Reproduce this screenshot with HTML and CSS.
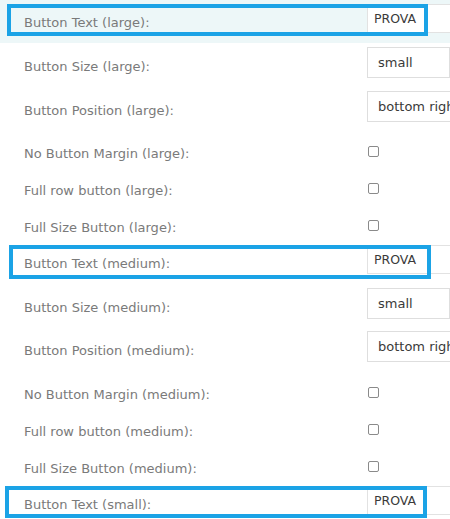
FILE: index.html
```html
<!DOCTYPE html>
<html>
<head>
<meta charset="utf-8">
<link rel="stylesheet" href="styles.css">
</head>
<body>
<div class="form">
  <div class="row row-text row-hl">
    <div class="label">Button Text (large):</div>
    <div class="ctrl"><input class="txt" type="text" value="PROVA"></div>
    <div class="mark mark-1"></div>
  </div>
  <div class="row row-select">
    <div class="label">Button Size (large):</div>
    <div class="ctrl"><select class="sel"><option>small</option></select></div>
  </div>
  <div class="row row-select">
    <div class="label">Button Position (large):</div>
    <div class="ctrl"><select class="sel"><option>bottom right</option></select></div>
  </div>
  <div class="row row-check row-check-first">
    <div class="label">No Button Margin (large):</div>
    <div class="ctrl"><input class="chk" type="checkbox"></div>
  </div>
  <div class="row row-check">
    <div class="label">Full row button (large):</div>
    <div class="ctrl"><input class="chk" type="checkbox"></div>
  </div>
  <div class="row row-check">
    <div class="label">Full Size Button (large):</div>
    <div class="ctrl"><input class="chk" type="checkbox"></div>
  </div>
  <div class="row row-text">
    <div class="label">Button Text (medium):</div>
    <div class="ctrl"><input class="txt" type="text" value="PROVA"></div>
    <div class="mark mark-2"></div>
  </div>
  <div class="row row-select">
    <div class="label">Button Size (medium):</div>
    <div class="ctrl"><select class="sel"><option>small</option></select></div>
  </div>
  <div class="row row-select">
    <div class="label">Button Position (medium):</div>
    <div class="ctrl"><select class="sel"><option>bottom right</option></select></div>
  </div>
  <div class="row row-check">
    <div class="label">No Button Margin (medium):</div>
    <div class="ctrl"><input class="chk" type="checkbox"></div>
  </div>
  <div class="row row-check">
    <div class="label">Full row button (medium):</div>
    <div class="ctrl"><input class="chk" type="checkbox"></div>
  </div>
  <div class="row row-check">
    <div class="label">Full Size Button (medium):</div>
    <div class="ctrl"><input class="chk" type="checkbox"></div>
  </div>
  <div class="row row-text">
    <div class="label">Button Text (small):</div>
    <div class="ctrl"><input class="txt" type="text" value="PROVA"></div>
    <div class="mark mark-3"></div>
  </div>
</div>
</body>
</html>
```
FILE: styles.css
```css
html, body {
  margin: 0;
  padding: 0;
  background: #ffffff;
  overflow: hidden;
}

.form {
  width: 450px;
  display: flex;
  flex-direction: column;
  font-family: "DejaVu Sans", Verdana, sans-serif;
}

.row {
  position: relative;
  display: flex;
  align-items: flex-start;
  box-sizing: border-box;
}

.row-text { height: 43px; }
.row-select { height: 43.5px; }
.row-check { height: 37px; }
.row-check-first { height: 36.5px; }

.row-hl { background: #edf7f8; }

.label {
  width: 367px;
  flex: none;
  box-sizing: border-box;
  padding-left: 24px;
  padding-top: 16px;
  font-size: 13px;
  line-height: 16px;
  color: #7a7a7a;
  white-space: nowrap;
}

.row-text .label { padding-top: 15px; }

.ctrl {
  flex: 1;
  min-width: 0;
  overflow: hidden;
  display: flex;
}

.txt {
  margin: 4px 0 0 0;
  width: 200px;
  height: 29px;
  box-sizing: border-box;
  border: 1px solid #e2e2e2;
  background: #ffffff;
  padding: 0 0 0 6px;
  font-family: "DejaVu Sans", Verdana, sans-serif;
  font-size: 12.5px;
  color: #3a3a3a;
  outline: none;
}

.sel {
  -webkit-appearance: none;
  appearance: none;
  margin: 4px 0 0 0;
  width: 200px;
  height: 31px;
  box-sizing: border-box;
  border: 1px solid #dedede;
  border-radius: 0;
  background: #ffffff;
  padding: 0 0 0 10px;
  font-family: "DejaVu Sans", Verdana, sans-serif;
  font-size: 13px;
  color: #3a3a3a;
  outline: none;
}

.chk {
  -webkit-appearance: none;
  appearance: none;
  margin: 16px 0 0 1px;
  width: 11px;
  height: 11px;
  box-sizing: border-box;
  border: 1px solid #8a8a8a;
  border-radius: 2px;
  background: #ffffff;
}

.mark {
  position: absolute;
  top: 4px;
  height: 32px;
  box-sizing: border-box;
  border: 4px solid #1ba3e6;
  pointer-events: none;
}

.mark-1 { left: 7px; width: 421px; }
.mark-2 { left: 9px; width: 422px; top: 4px; height: 34px; }
.mark-3 { left: 5px; width: 422px; }
```
